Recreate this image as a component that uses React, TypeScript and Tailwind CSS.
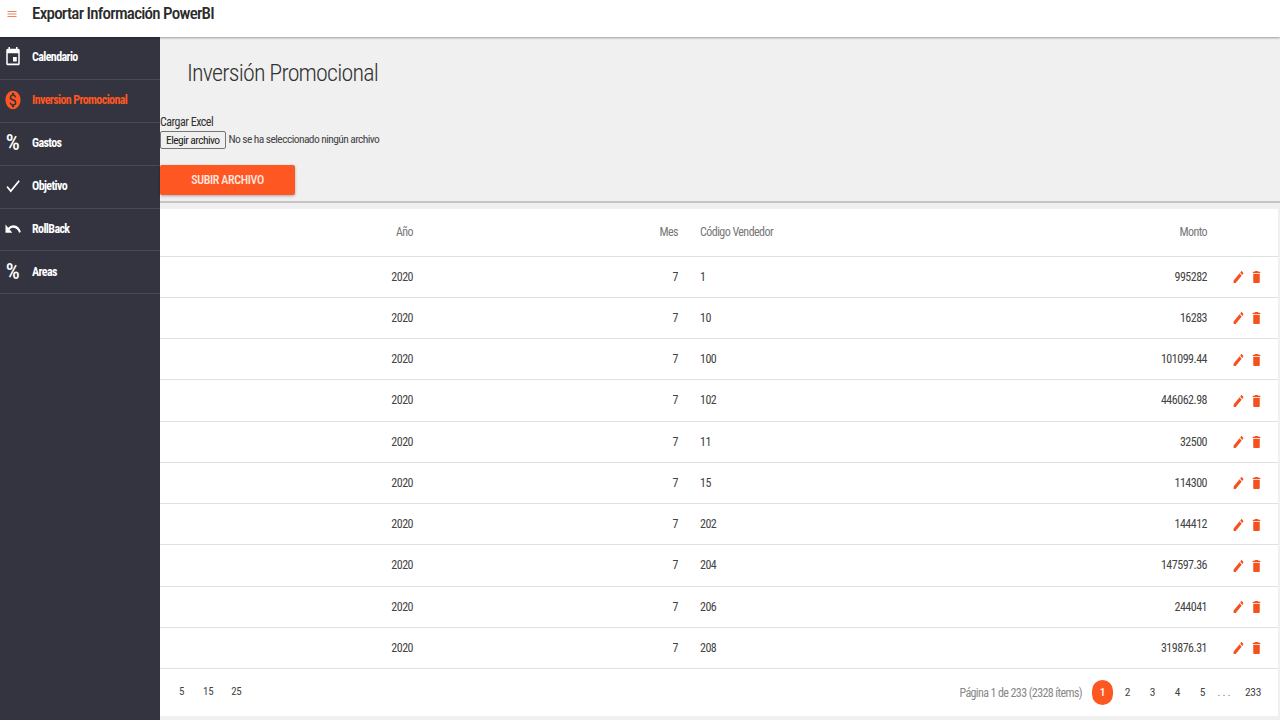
const iconPaths = {
  event: "M17 12h-5v5h5v-5zM16 1v2H8V1H6v2H5c-1.11 0-1.99.9-1.99 2L3 19c0 1.1.89 2 2 2h14c1.1 0 2-.9 2-2V5c0-1.1-.9-2-2-2h-1V1h-2zm3 18H5V8h14v11z",
  money: "M12 2C6.48 2 2 6.48 2 12s4.48 10 10 10 10-4.48 10-10S17.52 2 12 2zm1.41 16.09V20h-2.67v-1.93c-1.71-.36-3.16-1.46-3.27-3.4h1.96c.1 1.05.82 1.87 2.65 1.87 1.96 0 2.4-.98 2.4-1.59 0-.83-.44-1.61-2.67-2.14-2.48-.6-4.18-1.62-4.18-3.67 0-1.72 1.39-2.84 3.11-3.21V4h2.67v1.95c1.86.45 2.79 1.86 2.85 3.39H14.3c-.05-1.11-.64-1.87-2.22-1.87-1.5 0-2.4.68-2.4 1.64 0 .84.65 1.39 2.67 1.91s4.18 1.39 4.18 3.91c-.01 1.83-1.38 2.83-3.12 3.16z",
  check: "M9 16.17L4.83 12l-1.42 1.41L9 19 21 7l-1.41-1.41z",
  undo: "M12.5 8c-2.65 0-5.05.99-6.9 2.6L2 7v9h9l-3.62-3.62c1.39-1.16 3.16-1.88 5.12-1.88 3.54 0 6.55 2.31 7.6 5.5l2.37-.78C21.08 11.03 17.15 8 12.5 8z",
  edit: "M3 17.25V21h3.75L17.81 9.94l-3.75-3.75L3 17.25zM20.71 7.04c.39-.39.39-1.02 0-1.41l-2.34-2.34c-.39-.39-1.02-.39-1.41 0l-1.83 1.83 3.75 3.75 1.83-1.83z",
  trash: "M6 19c0 1.1.9 2 2 2h8c1.1 0 2-.9 2-2V7H6v12zM19 4h-3.5l-1-1h-5l-1 1H5v2h14V4z",
  menu: "M3 18h18v-2H3v2zm0-5h18v-2H3v2zm0-7v2h18V6H3z",
};

function Icon({ d, className }: { d: string; className: string }) {
  return (
    <svg viewBox="0 0 24 24" fill="currentColor" preserveAspectRatio="none" className={className}>
      <path d={d} />
    </svg>
  );
}

const navItems = [
  { label: "Calendario", icon: iconPaths.event },
  { label: "Inversion Promocional", icon: iconPaths.money, active: true },
  { label: "Gastos", icon: null },
  { label: "Objetivo", icon: iconPaths.check },
  { label: "RollBack", icon: iconPaths.undo },
  { label: "Areas", icon: null },
];

const rows = [
  ["1", "995282"],
  ["10", "16283"],
  ["100", "101099.44"],
  ["102", "446062.98"],
  ["11", "32500"],
  ["15", "114300"],
  ["202", "144412"],
  ["204", "147597.36"],
  ["206", "244041"],
  ["208", "319876.31"],
];

export default function App() {
  return (
    <div className="flex h-[720px] w-[1280px] flex-col overflow-hidden bg-[#f0f0f0] font-['Roboto',sans-serif] text-[12px] tracking-[-0.35px] text-[#444] [font-stretch:75%]">
      <header className="z-10 flex h-[37px] shrink-0 items-start bg-white shadow-[0_1px_2px_rgba(0,0,0,0.35)]">
        <Icon d={iconPaths.menu} className="mt-[8px] ml-[6px] h-[12px] w-[12px] text-[#f0825a]" />
        <h1 className="mt-[2px] ml-[14px] text-[17px] leading-[22px] font-medium tracking-[-0.75px] text-[#2b2b2b]">
          Exportar Información PowerBI
        </h1>
      </header>

      <div className="flex min-h-0 flex-1">
        <aside className="w-[160px] shrink-0 bg-[#33343f]">
          {navItems.map((item) => (
            <div
              key={item.label}
              className={`flex h-[42.9px] items-center border-b border-[#484954] pb-[1.5px] ${
                item.active ? "text-[#ff5722]" : "text-white"
              }`}
            >
              <div className="flex w-[25px] shrink-0 justify-center">
                {item.icon ? (
                  <Icon d={item.icon} className="h-[22px] w-[18px]" />
                ) : (
                  <span className="text-[22px] leading-[22px] font-medium">%</span>
                )}
              </div>
              <span className="ml-[7px] text-[12px] font-bold tracking-[-0.6px]">{item.label}</span>
            </div>
          ))}
        </aside>

        <main className="min-w-0 flex-1">
          <section className="flex h-[166px] flex-col border-b-2 border-[#c4c4c4] bg-[#f0f0f0]">
            <h2 className="mt-[20px] ml-[27px] text-[24px] leading-[32px] font-light tracking-[-0.8px] text-[#333]">
              Inversión Promocional
            </h2>
            <span className="mt-[26px] text-[12px] leading-[14px] tracking-[-0.5px] text-[#333]">Cargar Excel</span>
            <div className="mt-[2px] flex items-center">
              <button className="h-[18px] rounded-[2px] border border-[#767676] bg-[#efefef] px-[5px] text-[11.5px] leading-[15px] tracking-[-0.55px] text-[#222]">
                Elegir archivo
              </button>
              <span className="ml-[3px] text-[11.5px] tracking-[-0.58px] text-[#444]">No se ha seleccionado ningún archivo</span>
            </div>
            <button className="mt-[16px] h-[30px] w-[135px] rounded-[2px] bg-[#ff5722] text-[12px] font-medium tracking-[-0.35px] text-[#ffe9e0] shadow-[0_1px_3px_rgba(0,0,0,0.3)]">
              SUBIR ARCHIVO
            </button>
          </section>

          <section className="mt-[6px] mr-[2px] bg-white">
            <table className="w-full table-fixed border-collapse">
              <colgroup>
                <col className="w-[265px]" />
                <col className="w-[264px]" />
                <col />
                <col className="w-[60px]" />
              </colgroup>
              <thead>
                <tr className="h-[47px] border-b border-[#e0e0e0] tracking-[-0.55px] text-[#777]">
                  <th className="pr-[12px] text-right font-normal">Año</th>
                  <th className="pr-[11px] text-right font-normal">Mes</th>
                  <th className="pl-[11px] text-left font-normal">
                    <div className="flex justify-between pr-[11px]">
                      <span>Código Vendedor</span>
                      <span>Monto</span>
                    </div>
                  </th>
                  <th />
                </tr>
              </thead>
              <tbody>
                {rows.map(([code, amount]) => (
                  <tr key={code} className="h-[41.25px] border-b border-[#e0e0e0] tracking-[-0.5px]">
                    <td className="pr-[12px] text-right">2020</td>
                    <td className="pr-[11px] text-right">7</td>
                    <td className="pl-[11px]">
                      <div className="flex justify-between pr-[11px]">
                        <span>{code}</span>
                        <span>{amount}</span>
                      </div>
                    </td>
                    <td>
                      <div className="flex items-center gap-[5px] pt-[1px] pl-[14px] text-[#f4511e]">
                        <Icon d={iconPaths.edit} className="h-[16px] w-[13px]" />
                        <Icon d={iconPaths.trash} className="h-[16px] w-[13px]" />
                      </div>
                    </td>
                  </tr>
                ))}
              </tbody>
            </table>

            <div className="flex h-[47px] items-center pr-[17px]">
              <div className="flex text-[11px]">
                <span className="ml-[19px]">5</span>
                <span className="ml-[19px]">15</span>
                <span className="ml-[18px]">25</span>
              </div>
              <span className="mr-[10px] ml-auto tracking-[-0.6px] text-[#888]">Página 1 de 233 (2328 ítems)</span>
              <div className="flex items-center text-[11.5px]">
                <span className="mr-[2px] flex h-[25px] w-[21px] items-center justify-center rounded-full bg-[#ff5722] font-medium text-white">1</span>
                <span className="w-[25px] text-center">2</span>
                <span className="w-[25px] text-center">3</span>
                <span className="w-[25px] text-center">4</span>
                <span className="w-[25px] text-center">5</span>
                <span className="w-[20px] text-center tracking-[2px] text-[#888]">...</span>
                <span className="ml-[10px]">233</span>
              </div>
            </div>
          </section>
        </main>
      </div>
    </div>
  );
}
